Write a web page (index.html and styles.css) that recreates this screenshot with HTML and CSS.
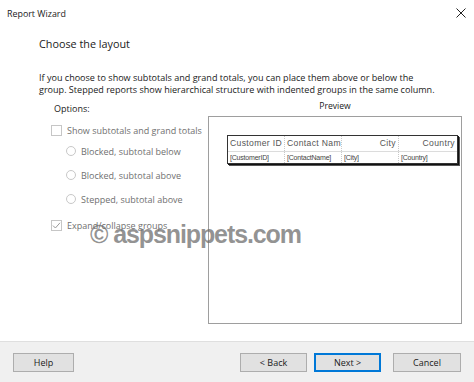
FILE: index.html
```html
<!DOCTYPE html>
<html>
<head>
<meta charset="utf-8">
<link rel="stylesheet" href="styles.css">
</head>
<body>
<div class="dialog">
  <div class="titlebar">
    <span class="title">Report Wizard</span>
    <svg class="close" width="10" height="10" viewBox="0 0 10 10"><path d="M0.5 0.5L9.5 9.5M9.5 0.5L0.5 9.5" stroke="#222" stroke-width="1"/></svg>
  </div>
  <div class="content">
    <h1 class="heading">Choose the layout</h1>
    <p class="desc">If you choose to show subtotals and grand totals, you can place them above or below the group. Stepped reports show hierarchical structure with indented groups in the same column.</p>
    <div class="main">
      <div class="options">
        <div class="opt-label">Options:</div>
        <div class="check-row">
          <span class="checkbox"></span>
          <span class="dis">Show subtotals and grand totals</span>
        </div>
        <div class="radio-row"><span class="radio"></span><span class="dis">Blocked, subtotal below</span></div>
        <div class="radio-row"><span class="radio"></span><span class="dis">Blocked, subtotal above</span></div>
        <div class="radio-row"><span class="radio"></span><span class="dis">Stepped, subtotal above</span></div>
        <div class="check-row expand">
          <span class="checkbox checked"><svg width="9" height="9" viewBox="0 0 9 9"><path d="M1 4.6L3.4 7L8 1.8" fill="none" stroke="#9a9a9a" stroke-width="1"/></svg></span>
          <span class="dis">Expand/collapse groups</span>
        </div>
      </div>
      <div class="preview">
        <div class="preview-label">Preview</div>
        <div class="preview-box">
          <div class="tbl">
            <div class="tr head">
              <div class="td">Customer ID</div>
              <div class="td">Contact Nam</div>
              <div class="td right">City</div>
              <div class="td right">Country</div>
            </div>
            <div class="tr data">
              <div class="td">[CustomerID]</div>
              <div class="td">[ContactName]</div>
              <div class="td">[City]</div>
              <div class="td">[Country]</div>
            </div>
          </div>
        </div>
      </div>
    </div>
  </div>
  <div class="footer">
    <button class="btn help">Help</button>
    <div class="spacer"></div>
    <button class="btn">&lt; Back</button>
    <button class="btn primary">Next &gt;</button>
    <button class="btn cancel">Cancel</button>
  </div>
  <div class="watermark">© aspsnippets.com</div>
</div>
</body>
</html>
```
FILE: styles.css
```css
* { box-sizing: border-box; }
html, body { margin: 0; padding: 0; }
body {
  width: 474px;
  height: 382px;
  overflow: hidden;
  background: #fff;
  font-family: "Open Sans", "Noto Sans", sans-serif;
  color: #1e1e1e;
}
.dialog {
  position: relative;
  width: 474px;
  height: 382px;
  display: flex;
  flex-direction: column;
  background: #fff;
}
.titlebar {
  height: 26px;
  display: flex;
  align-items: center;
  justify-content: space-between;
  padding: 0 7px 0 7px;
}
.title { font-size: 8.9px; color: #1a1a1a; }
.close { margin-right: 1px; }
.content {
  flex: 1;
  padding-left: 39px;
  padding-right: 12px;
}
.heading {
  margin: 10px 0 0 0;
  font-size: 10.8px;
  font-weight: 400;
  line-height: 16px;
  color: #1a1a1a;
}
.desc {
  margin: 20px 0 0 0;
  font-size: 9.05px;
  line-height: 12px;
  color: #1a1a1a;
  width: 398px;
}
.main {
  display: flex;
  margin-top: 4px;
}
.options {
  width: 169px;
  padding-left: 12px;
}
.opt-label {
  font-size: 9px;
  line-height: 12px;
  padding-left: 3px;
  margin-top: 3px;
  color: #1a1a1a;
}
.dis { color: #707070; font-size: 9px; white-space: nowrap; }
.check-row {
  display: flex;
  align-items: center;
  gap: 5px;
  margin-top: 8px;
  height: 14px;
}
.checkbox {
  width: 11px;
  height: 11px;
  border: 1px solid #c6c6c6;
  background: #fff;
  display: inline-flex;
  align-items: center;
  justify-content: center;
}
.radio-row {
  display: flex;
  align-items: center;
  gap: 5px;
  height: 14px;
  margin-top: 10px;
  padding-left: 15px;
}
.radio {
  width: 10px;
  height: 10px;
  border: 1px solid #c8c8c8;
  border-radius: 50%;
}
.check-row + .radio-row { margin-top: 7px; }
.check-row.expand { margin-top: 12px; }
.preview {
  width: 254px;
  display: flex;
  flex-direction: column;
}
.preview-label {
  text-align: center;
  font-size: 8.6px;
  line-height: 12px;
  color: #1a1a1a;
}
.preview-box {
  margin-top: 4px;
  height: 208px;
  border: 1px solid #9e9e9e;
  padding: 18px 3px 0 18px;
}
.tbl {
  border: 1px solid #333;
  box-shadow: 1px 1px 0 #111, 2px 2px 0 #555;
  width: 231px;
  background: #fff;
}
.tr { display: grid; grid-template-columns: 57px 57px 57px 1fr; }
.td {
  border-right: 1px dotted #c8c8c8;
  padding: 0 2px;
  white-space: nowrap;
  overflow: hidden;
}
.td:last-child { border-right: none; }
.head .td {
  font-family: "Liberation Sans", sans-serif;
  font-size: 8.6px;
  line-height: 15px;
  color: #555;
  letter-spacing: 0.35px;
}
.right { text-align: right; }
.data { border-top: 1px solid #dcdcdc; }
.data .td {
  font-family: "Liberation Sans", sans-serif;
  font-size: 7px;
  line-height: 11px;
  color: #444;
  letter-spacing: -0.2px;
}
.footer {
  height: 41px;
  background: #f0f0f0;
  border-top: 1px solid #dfdfdf;
  display: flex;
  align-items: flex-start;
  padding: 11px 13px 0 13px;
}
.spacer { flex: 1; }
.btn {
  width: 67px;
  height: 19px;
  background: #e1e1e1;
  border: 1px solid #adadad;
  font-family: "Open Sans", "Noto Sans", sans-serif;
  font-size: 9px;
  color: #1a1a1a;
  padding: 0;
}
.btn.help { width: 61px; }
.btn + .btn { margin-left: 7px; }
.btn.primary { border: 1px solid #0078d7; box-shadow: inset 0 0 0 1px #0078d7; }
.btn.cancel { margin-left: 12px; width: 68px; }
.watermark {
  position: absolute;
  left: 90px;
  top: 222px;
  font-family: "Liberation Sans", sans-serif;
  font-weight: 700;
  font-size: 25px;
  line-height: 25px;
  color: rgba(105, 105, 105, 0.72);
  letter-spacing: -1.1px;
  white-space: nowrap;
}
```
